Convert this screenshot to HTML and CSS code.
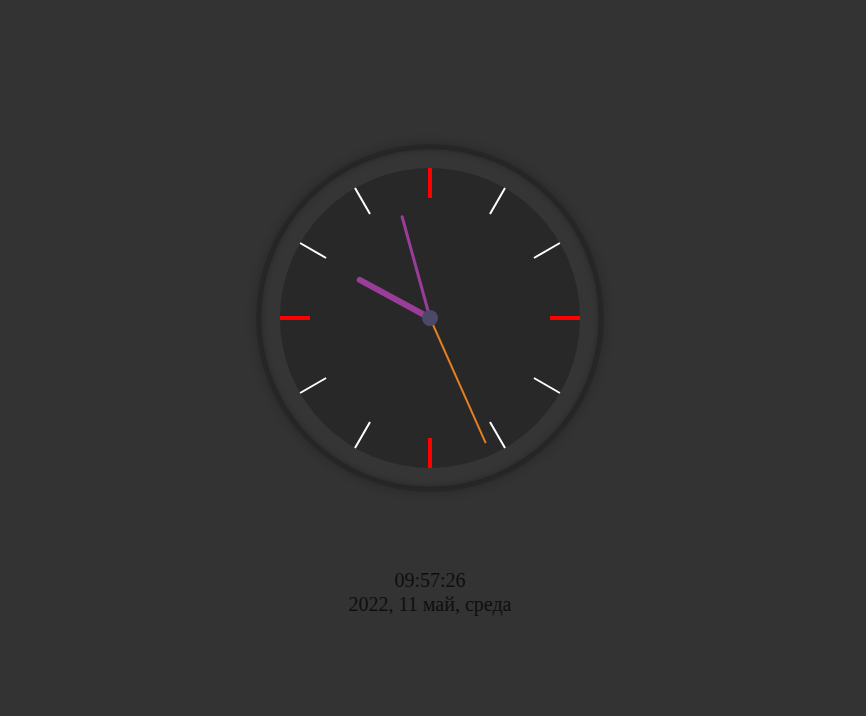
FILE: index.html
```html
<!DOCTYPE html>
<html lang="ru">
<head>
<meta charset="utf-8">
<title>Часы</title>
<link rel="stylesheet" href="styles.css">
</head>
<body>
<main class="page">
  <div class="clock">
    <div class="dial">
      <svg class="face" width="300" height="300" viewBox="0 0 300 300">
        <g class="ticks-minor">
          <line x1="150" y1="0" x2="150" y2="30" transform="rotate(30 150 150)"/>
          <line x1="150" y1="0" x2="150" y2="30" transform="rotate(60 150 150)"/>
          <line x1="150" y1="0" x2="150" y2="30" transform="rotate(120 150 150)"/>
          <line x1="150" y1="0" x2="150" y2="30" transform="rotate(150 150 150)"/>
          <line x1="150" y1="0" x2="150" y2="30" transform="rotate(210 150 150)"/>
          <line x1="150" y1="0" x2="150" y2="30" transform="rotate(240 150 150)"/>
          <line x1="150" y1="0" x2="150" y2="30" transform="rotate(300 150 150)"/>
          <line x1="150" y1="0" x2="150" y2="30" transform="rotate(330 150 150)"/>
        </g>
        <g class="ticks-major">
          <line x1="150" y1="0" x2="150" y2="30"/>
          <line x1="150" y1="0" x2="150" y2="30" transform="rotate(90 150 150)"/>
          <line x1="150" y1="0" x2="150" y2="30" transform="rotate(180 150 150)"/>
          <line x1="150" y1="0" x2="150" y2="30" transform="rotate(270 150 150)"/>
        </g>
        <line class="hand-hour" x1="150" y1="150" x2="150" y2="70" transform="rotate(298.5 150 150)"/>
        <line class="hand-minute" x1="150" y1="150" x2="150" y2="45" transform="rotate(344.6 150 150)"/>
        <line class="hand-second" x1="150" y1="150" x2="150" y2="13" transform="rotate(156 150 150)"/>
        <circle class="hub" cx="150" cy="150" r="8"/>
      </svg>
    </div>
  </div>
  <div class="readout">
    <div class="time">09:57:26</div>
    <div class="date">2022, 11 май, среда</div>
  </div>
</main>
</body>
</html>
```
FILE: styles.css
```css
html, body {
  margin: 0;
  padding: 0;
  background: #333333;
}
body {
  min-height: 716px;
  font-family: "Liberation Serif", "Times New Roman", serif;
}
.page {
  width: 860px;
  display: flex;
  flex-direction: column;
  align-items: center;
  padding-top: 149px;
}
.clock {
  padding: 19px;
  border-radius: 50%;
  background: #353535;
  box-shadow:
    0 0 0 5px rgba(0, 0, 0, 0.13),
    0 0 10px 7px rgba(0, 0, 0, 0.16),
    inset 0 0 6px rgba(0, 0, 0, 0.3);
}
.dial {
  width: 300px;
  height: 300px;
  border-radius: 50%;
  background: #282828;
}
.face {
  display: block;
}
.ticks-minor line {
  stroke: #ffffff;
  stroke-width: 2;
}
.ticks-major line {
  stroke: #ff0000;
  stroke-width: 4;
}
.hand-hour {
  stroke: #993d99;
  stroke-width: 6;
  stroke-linecap: round;
}
.hand-minute {
  stroke: #993d99;
  stroke-width: 3;
  stroke-linecap: round;
}
.hand-second {
  stroke: #e67e22;
  stroke-width: 2;
}
.hub {
  fill: #4b4a66;
}
.readout {
  margin-top: 81px;
  text-align: center;
  font-size: 20px;
  line-height: 24px;
  color: #0e0e0e;
}
```
